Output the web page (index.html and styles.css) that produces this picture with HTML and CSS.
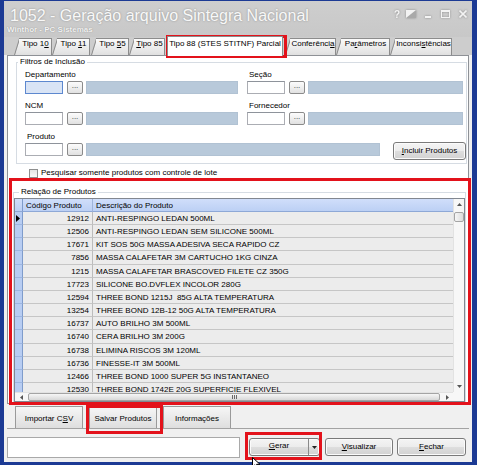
FILE: index.html
```html
<!DOCTYPE html>
<html>
	<head>
		<meta charset="utf-8">
		<title>1052 - Geração arquivo Sintegra Nacional</title>
		<link rel="stylesheet" href="styles.css">
	</head>
	<body>
		<div class="win">
			<header class="titlebar">
				<div class="title">
					<div class="caption">1052 - Geração arquivo Sintegra Nacional</div>
					<div class="sub">Winthor - PC Sistemas</div>
				</div>
				<div class="ctrls">
					<span class="help">?</span>
					<svg class="skin" width="10" height="8" viewBox="0 0 10 8"><rect x="0" y="0" width="10" height="8" fill="#f3f3f3"/><polygon points="0,8 10,0 10,8" fill="#a9a9a9"/></svg>
					<svg class="min" width="6" height="8" viewBox="0 0 6 8"><rect x="0" y="6" width="6" height="2" fill="#f3f3f3"/></svg>
					<svg class="max" width="9" height="8" viewBox="0 0 9 8"><rect x="0.5" y="1" width="8" height="6.5" fill="none" stroke="#f3f3f3" stroke-width="1"/><rect x="0" y="0" width="9" height="2" fill="#f3f3f3"/></svg>
					<svg class="close" width="8" height="8" viewBox="0 0 8 8"><path d="M0.5 0.5 L7.5 7.5 M7.5 0.5 L0.5 7.5" stroke="#f3f3f3" stroke-width="1.6"/></svg>
				</div>
			</header>

			<nav class="tabs">
				<div class="tab t10">Tipo 1<u>0</u></div>
				<div class="tab t11">Tipo <u>1</u>1</div>
				<div class="tab t55">Tipo <u>5</u>5</div>
				<div class="tab t85"><u>T</u>ipo 85</div>
				<div class="tab t88 active">Tipo 88 (STES STITNF) Parcial</div>
				<div class="tab tconf">Conferênci<u>a</u></div>
				<div class="tab tpar">Pa<u>r</u>âmetros</div>
				<div class="tab tinc">Inconsi<u>s</u>tências</div>
			</nav>

			<div class="panel">
				<fieldset class="filtros">
					<legend>Filtros de Inclusão</legend>
					<div class="fbody">
						<div class="frow">
							<div class="fgroup left">
								<label>Departamento</label>
								<div class="pick"><span class="code focus"></span><span class="dots">...</span><span class="desc"></span></div>
							</div>
							<div class="fgroup right">
								<label>Seção</label>
								<div class="pick"><span class="code"></span><span class="dots">...</span><span class="desc"></span></div>
							</div>
						</div>
						<div class="frow">
							<div class="fgroup left">
								<label>NCM</label>
								<div class="pick"><span class="code"></span><span class="dots">...</span><span class="desc"></span></div>
							</div>
							<div class="fgroup right">
								<label>Fornecedor</label>
								<div class="pick"><span class="code"></span><span class="dots">...</span><span class="desc"></span></div>
							</div>
						</div>
						<div class="frow">
							<div class="fgroup wide">
								<label class="lprod">Produto</label>
								<div class="pick"><span class="code"></span><span class="dots">...</span><span class="desc"></span></div>
							</div>
							<button class="btn incluir"><u>I</u>ncluir Produtos</button>
						</div>
					</div>
				</fieldset>

				<div class="chk"><span class="box"></span>Pesquisar somente produtos com controle de lote</div>

				<fieldset class="relacao">
					<legend>Relação de Produtos</legend>
					<div class="grid">
						<div class="gtop">
							<div class="gtable">
								<div class="row head"><span class="ind"></span><span class="cod">Código Produto</span><span class="dsc">Descrição do Produto</span></div>
								<div class="row"><span class="ind"><svg width="4" height="7" viewBox="0 0 4 7"><polygon points="0,0 4,3.5 0,7" fill="#000"/></svg></span><span class="cod">12912</span><span class="dsc">ANTI-RESPINGO LEDAN 500ML</span></div>
								<div class="row"><span class="ind"></span><span class="cod">12506</span><span class="dsc">ANTI-RESPINGO LEDAN SEM SILICONE 500ML</span></div>
								<div class="row"><span class="ind"></span><span class="cod">17671</span><span class="dsc">KIT SOS 50G MASSA ADESIVA SECA RAPIDO CZ</span></div>
								<div class="row"><span class="ind"></span><span class="cod">7856</span><span class="dsc">MASSA CALAFETAR 3M CARTUCHO 1KG CINZA</span></div>
								<div class="row"><span class="ind"></span><span class="cod">1215</span><span class="dsc">MASSA CALAFETAR BRASCOVED FILETE CZ 350G</span></div>
								<div class="row"><span class="ind"></span><span class="cod">17723</span><span class="dsc">SILICONE BO.DVFLEX INCOLOR 280G</span></div>
								<div class="row"><span class="ind"></span><span class="cod">12594</span><span class="dsc">THREE BOND 1215J&nbsp; 85G ALTA TEMPERATURA</span></div>
								<div class="row"><span class="ind"></span><span class="cod">13254</span><span class="dsc">THREE BOND 12B-12 50G ALTA TEMPERATURA</span></div>
								<div class="row"><span class="ind"></span><span class="cod">16737</span><span class="dsc">AUTO BRILHO 3M 500ML</span></div>
								<div class="row"><span class="ind"></span><span class="cod">16740</span><span class="dsc">CERA BRILHO 3M 200G</span></div>
								<div class="row"><span class="ind"></span><span class="cod">16738</span><span class="dsc">ELIMINA RISCOS 3M 120ML</span></div>
								<div class="row"><span class="ind"></span><span class="cod">16736</span><span class="dsc">FINESSE-IT 3M 500ML</span></div>
								<div class="row"><span class="ind"></span><span class="cod">12466</span><span class="dsc">THREE BOND 1000 SUPER 5G INSTANTANEO</span></div>
								<div class="row"><span class="ind"></span><span class="cod">12530</span><span class="dsc">THREE BOND 1742E 20G SUPERFICIE FLEXIVEL</span></div>
							</div>
							<div class="vscroll">
								<span class="arr"><svg width="5" height="3" viewBox="0 0 5 3"><polygon points="0,3 2.5,0 5,3" fill="#555"/></svg></span>
								<span class="vthumb"></span>
								<span class="vfill"></span>
								<span class="arr"><svg width="5" height="3" viewBox="0 0 5 3"><polygon points="0,0 5,0 2.5,3" fill="#555"/></svg></span>
							</div>
						</div>
						<div class="gbot">
							<div class="hscroll">
								<span class="harr"><svg width="3" height="5" viewBox="0 0 3 5"><polygon points="3,0 3,5 0,2.5" fill="#555"/></svg></span>
								<span class="hthumb"><svg width="5" height="4" viewBox="0 0 5 4"><path d="M0.5 0 V4 M2.5 0 V4 M4.5 0 V4" stroke="#6a6a6a" stroke-width="1"/></svg></span>
								<span class="harr"><svg width="3" height="5" viewBox="0 0 3 5"><polygon points="0,0 3,2.5 0,5" fill="#555"/></svg></span>
							</div>
							<div class="corner"></div>
						</div>
					</div>
				</fieldset>
			</div>

			<div class="btabs">
				<div class="btab">Importar C<u>S</u>V</div>
				<div class="btab">Salvar Produtos</div>
				<div class="btab">Informações</div>
			</div>

			<footer class="footer">
				<div class="status"></div>
				<button class="btn gerar"><span class="gmain"><u>G</u>erar</span><span class="gdrop"><svg width="5" height="3" viewBox="0 0 5 3"><polygon points="0,0 5,0 2.5,3" fill="#222"/></svg></span></button>
				<button class="btn visualizar"><u>V</u>isualizar</button>
				<button class="btn fechar"><u>F</u>echar</button>
			</footer>

			<!--marcações vermelhas-->
			<div class="mark m-tab"></div>
			<div class="mark m-grid"></div>
			<div class="mark m-salvar"></div>
			<div class="mark m-gerar"></div>
			<svg class="cursor" width="9" height="12" viewBox="0 0 9 12"><path d="M0.5 0.5 L0.5 10 L3 7.8 L4.8 11.5 L6.3 10.8 L4.6 7.3 L8 7.3 Z" fill="#fff" stroke="#000" stroke-width="1"/></svg>
		</div>
	</body>
</html>
```

FILE: styles.css
```css
body,html{
	margin: 0;
}
body{
	font: 8px/10px "Liberation Sans", Arial, sans-serif;
	color: #000;
	background: #fff;
}
button{
	font: inherit;
	color: inherit;
	padding: 0;
	margin: 0;
}
.win{
	position: relative;
	width: 477px;
	height: 465px;
	box-sizing: border-box;
	border-style: solid;
	border-color: #1c3a94;
	border-width: 1px 5px 3px 4px;
	background: #f0f0f0;
}

/* barra de titulo */
.titlebar{
	height: 36px;
	display: flex;
	justify-content: space-between;
	background: linear-gradient(#cecece, #c8c8c8);
}
.caption{
	margin: 6px 0 0 6px;
	font-size: 16px;
	line-height: 18px;
	color: #f8f8f8;
	text-shadow: 0 0 2px #8a8a8a;
	white-space: nowrap;
}
.sub{
	margin-left: 3px;
	font-weight: bold;
	color: #f4f4f4;
	text-shadow: 0 0 1px #7a7a7a;
	white-space: nowrap;
}
.ctrls{
	display: flex;
	align-items: flex-start;
	margin: 9px 5px 0 0;
}
.ctrls svg,.ctrls span{
	display: block;
	filter: drop-shadow(0 0 1px #8a8a8a);
}
.help{
	width: 6px;
	font: bold 10px/9px "Liberation Sans", Arial, sans-serif;
	color: #f4f4f4;
}
.skin{ margin-left: 6px; }
.min{ margin-left: 9px; }
.max{ margin-left: 10px; }
.close{ margin-left: 9px; }

/* abas */
.tabs{
	height: 18px;
	display: flex;
	padding-left: 10px;
	background: #cdcdcd;
}
.tab{
	position: relative;
	z-index: 0;
	box-sizing: border-box;
	height: 17px;
	margin-top: 1px;
	padding: 1px 0 0 5px;
	text-align: center;
	white-space: nowrap;
}
.tab::before,.tab::after{
	content: "";
	position: absolute;
	z-index: -1;
	top: 0;
	bottom: 0;
	box-sizing: border-box;
	border-top: 1px solid #8c8c8c;
	background: linear-gradient(#fafafa, #e0e0e0);
}
.tab::before{
	left: 0;
	width: 8px;
	border-left: 1px solid #8c8c8c;
	transform: skewX(-17deg);
	transform-origin: 0 100%;
}
.tab::after{
	left: 5px;
	right: 0;
	border-right: 1px solid #8c8c8c;
}
.t10{ width: 38px; }
.t11{ width: 38px; }
.t55{ width: 38px; margin-left: 1px; }
.t85{ width: 36px; }
.t88{ width: 116px; margin-left: 2px; }
.tconf{ width: 51px; margin-left: 2px; }
.tpar{ width: 54px; }
.tinc{ width: 62px; }
.tab.active{
	z-index: 2;
	height: 20px;
	margin-top: -1px;
	padding: 2px 0 0;
	border: 1px solid #8c8c8c;
	border-bottom: none;
	background: #fff;
}
.tab.active::before,.tab.active::after{
	display: none;
}

/* painel */
.panel{
	height: 349px;
	box-sizing: border-box;
	margin: 0 3px;
	border: 1px solid #8e9196;
	background: #fff;
}
fieldset{
	min-width: 0;
	padding: 0;
	border: 1px solid #d6dce3;
}
legend{
	padding: 0 2px;
	line-height: 10px;
}
.filtros{
	margin: 1px 1px 0 8px;
	padding-bottom: 3px;
}
.filtros legend{
	margin-left: 1px;
}
.fbody{
	padding: 3px 0 0 8px;
}
.frow{
	display: flex;
	align-items: flex-start;
}
.frow + .frow{
	margin-top: 7px;
}
.fgroup label{
	display: block;
	line-height: 10px;
}
.fgroup.left{
	width: 213px;
	margin-right: 9px;
}
.fgroup.right{
	width: 216px;
}
.fgroup.right label{
	padding-left: 2px;
}
.fgroup.wide{
	width: 355px;
}
.lprod{
	padding-left: 2px;
}
.pick{
	display: flex;
	height: 13px;
	margin-top: 1px;
}
.pick span{
	box-sizing: border-box;
	height: 13px;
}
.code{
	width: 38px;
	border: 1px solid #abadb3;
	border-top-color: #8e939b;
	background: #fff;
}
.code.focus{
	border-color: #5d88cf;
	background: #d9e4f5;
}
.dots{
	width: 16px;
	margin-left: 4px;
	border: 1px solid #8b8b8b;
	border-radius: 2px;
	background: linear-gradient(#fcfcfc, #e1e1e1);
	text-align: center;
	font-size: 8px;
	line-height: 8px;
	color: #333;
}
.desc{
	flex: 1;
	margin-left: 3px;
	border: 1px solid #b1c2d3;
	background: #b8c9da;
}
.btn{
	box-sizing: border-box;
	border: 1px solid #7a7a7a;
	border-radius: 3px;
	background: linear-gradient(#f4f4f4 0%, #ececec 50%, #dedede 51%, #d2d2d2 100%);
	box-shadow: inset 0 0 0 1px #fbfbfb;
	text-align: center;
	cursor: pointer;
}
.incluir{
	width: 73px;
	height: 18px;
	margin: 10px 0 0 13px;
	line-height: 14px;
}

.chk{
	display: flex;
	align-items: center;
	height: 10px;
	margin: 4px 0 0 21px;
}
.chk .box{
	width: 9px;
	height: 9px;
	box-sizing: border-box;
	margin-right: 3px;
	border: 1px solid #8e8f8f;
	background: linear-gradient(#e4e4e4, #fafafa);
}

.relacao{
	margin: 9px 2px 0 5px;
	border-bottom: none;
}
.relacao legend{
	margin-left: 5px;
}

/* grade */
.grid{
	height: 204px;
	box-sizing: border-box;
	margin-top: 1px;
	border: 1px solid #828790;
	background: #f6f6f6;
	display: flex;
	flex-direction: column;
}
.gtop{
	height: 193px;
	display: flex;
}
.gtable{
	flex: 1;
	overflow: hidden;
	background: #ececec;
}
.row{
	display: flex;
	height: 13.17px;
}
.row.head{
	height: 13px;
}
.row span{
	box-sizing: border-box;
	height: 100%;
	line-height: 11px;
	padding-top: 1px;
	white-space: nowrap;
	overflow: hidden;
}
.ind{
	flex: none;
	width: 8px;
	border-right: 1px solid #7f9ccb;
	border-bottom: 1px solid #9db6e1;
	background: #b8cdf2;
}
.ind svg{
	display: block;
	margin: 2px 0 0 1px;
}
.cod{
	flex: none;
	width: 70px;
	padding-right: 3px;
	text-align: right;
	border-right: 1px solid #bcbcbc;
	border-bottom: 1px solid #c6c6c6;
}
.dsc{
	flex: 1;
	padding-left: 3px;
	border-bottom: 1px solid #c6c6c6;
}
.row.head span{
	background: linear-gradient(#d0defa, #bcd0f4);
	border-bottom: 1px solid #8ea8d6;
}
.row.head .cod{
	text-align: left;
	padding-left: 3px;
	border-right-color: #9fb4da;
}
.vscroll{
	width: 11px;
	display: flex;
	flex-direction: column;
	border-left: 1px solid #e2e2e2;
	box-sizing: border-box;
	background: #f7f7f7;
}
.arr{
	height: 11px;
	display: flex;
	align-items: center;
	justify-content: center;
}
.vthumb{
	height: 10px;
	margin: 2px 0 0 0;
	box-sizing: border-box;
	border: 1px solid #a4a4a4;
	border-radius: 2px;
	background: linear-gradient(90deg, #f6f6f6, #dcdcdc);
}
.vfill{
	flex: 1;
}
.gbot{
	height: 9px;
	display: flex;
}
.hscroll{
	flex: 1;
	display: flex;
	background: #f7f7f7;
	border-top: 1px solid #e2e2e2;
}
.harr{
	width: 12px;
	display: flex;
	align-items: center;
	justify-content: center;
}
.hthumb{
	flex: 1;
	margin: 0 1px;
	box-sizing: border-box;
	border: 1px solid #a4a4a4;
	border-radius: 2px;
	background: linear-gradient(#f6f6f6, #d8d8d8);
	display: flex;
	align-items: center;
	justify-content: center;
}
.corner{
	width: 11px;
	background: #f7f7f7;
}

/* abas de baixo */
.btabs{
	height: 24px;
	display: flex;
	margin: 0 3px;
	padding-left: 8px;
	border-bottom: 1px solid #a3a3a3;
}
.btab{
	width: 68px;
	height: 22px;
	box-sizing: border-box;
	margin-top: 2px;
	padding-top: 7px;
	text-align: center;
	border: 1px solid #9a9a9a;
	border-bottom: none;
	background: linear-gradient(#f6f6f6, #dedede);
}
.btab + .btab{
	margin-left: 6px;
}

/* rodape */
.footer{
	display: flex;
	align-items: flex-start;
	padding: 8px 6px 0 3px;
}
.status{
	width: 233px;
	height: 21px;
	box-sizing: border-box;
	border: 1px solid #a9a9a9;
	background: #fff;
}
.footer .btn{
	height: 18px;
	margin-top: 1px;
	line-height: 14px;
}
.gerar{
	width: 71px;
	margin-left: 9px;
	display: flex;
}
.gmain{
	flex: 1;
}
.gdrop{
	width: 10px;
	border-left: 1px solid #8a8a8a;
	display: flex;
	align-items: center;
	justify-content: center;
}
.visualizar{
	width: 68px;
	margin-left: 5px;
}
.fechar{
	width: 69px;
	margin-left: 4px;
}

/* marcações */
.mark{
	position: absolute;
	box-sizing: border-box;
	border: 3px solid #e3121b;
	pointer-events: none;
}
.m-tab{ left: 162px; top: 34px; width: 121px; height: 23px; }
.m-grid{ left: 5px; top: 177px; width: 462px; height: 227px; }
.m-salvar{ left: 82px; top: 404px; width: 77px; height: 29px; }
.m-gerar{ left: 241px; top: 431px; width: 77px; height: 28px; }
.cursor{
	position: absolute;
	left: 248px;
	top: 456px;
}
```
